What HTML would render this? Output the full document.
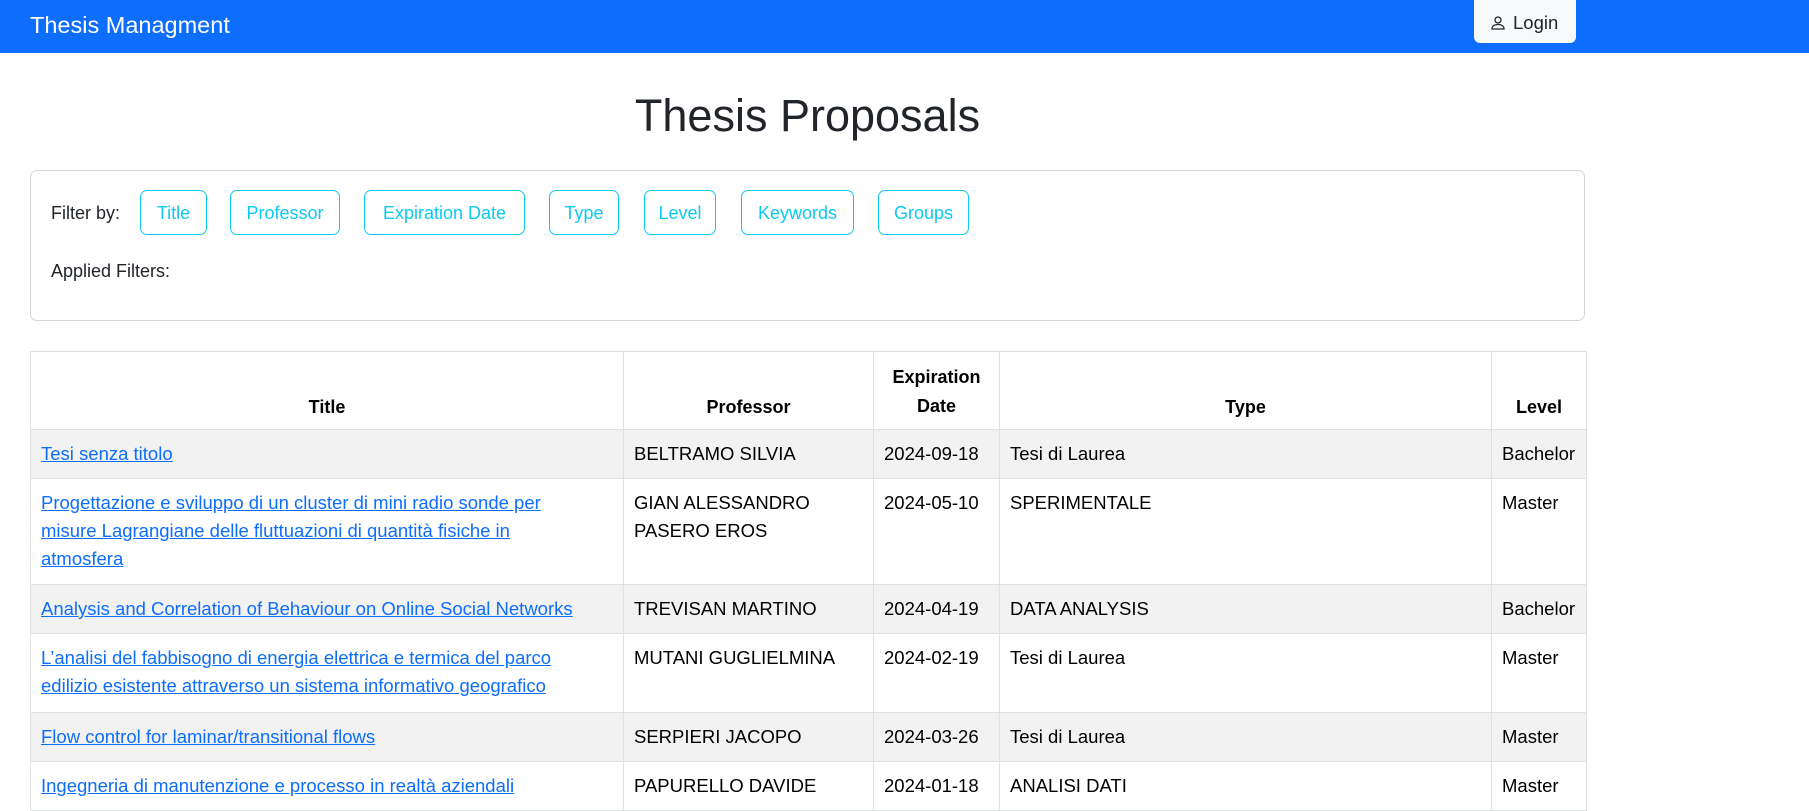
<!DOCTYPE html>
<html><head><meta charset="utf-8"><style>
*{box-sizing:border-box;margin:0;padding:0}
body{width:1809px;height:810px;overflow:hidden;background:#fff;font-family:"Liberation Sans",sans-serif;color:#212529;font-size:18px}
.nav{position:absolute;left:0;top:0;width:1809px;height:53px;background:#0d6efd}
.brand{position:absolute;left:30px;top:10px;color:#fff;font-size:23.5px;line-height:30px}
.login{position:absolute;left:1474px;top:0;width:102px;height:43px;background:#f8f9fa;border-radius:0 0 6px 6px;font-size:18.5px;line-height:45px;color:#212529}
.login svg{position:absolute;left:16px;top:15px}
.login span{position:absolute;left:39px;top:0}
h1{position:absolute;left:0;width:1615px;text-align:center;top:86px;font-weight:400;font-size:45px;line-height:60px}
.card{position:absolute;left:30px;top:170px;width:1555px;height:151px;border:1px solid #d5d5d5;border-radius:7px}
.fb{position:absolute;left:20px;top:30px;line-height:24px;font-size:18px}
.af{position:absolute;left:20px;top:88px;line-height:24px;font-size:18px}
.btn{position:absolute;top:19px;height:45px;border:1px solid #0dcaf0;border-radius:7px;color:#0dcaf0;text-align:center;line-height:45px;font-size:18px;white-space:nowrap}
table{position:absolute;left:30px;top:351px;border-collapse:collapse;table-layout:fixed;width:1556px;color:#000}
td,th{border:1px solid #dee2e6;padding:10px 10px;line-height:28px;vertical-align:top;white-space:nowrap;font-size:18.5px;overflow:hidden}
th{vertical-align:bottom;text-align:center;font-weight:bold;padding:9px 10px 8px;font-size:18px}
tr.s td{background:#f2f2f2}
a{color:#0d6efd;text-decoration:underline}
</style></head><body>
<div class="nav"><div class="brand">Thesis Managment</div>
<div class="login"><svg width="16" height="16" viewBox="0 0 16 16"><circle cx="8" cy="5" r="3" fill="none" stroke="#212529" stroke-width="1.3"/><path d="M2 14c0-3 2.5-4.5 6-4.5s6 1.5 6 4.5z" fill="none" stroke="#212529" stroke-width="1.3"/></svg><span>Login</span></div></div>
<h1>Thesis Proposals</h1>
<div class="card">
<div class="fb">Filter by:</div>
<div class="btn" style="left:109px;width:67px">Title</div>
<div class="btn" style="left:199px;width:110px">Professor</div>
<div class="btn" style="left:333px;width:161px">Expiration Date</div>
<div class="btn" style="left:518px;width:70px">Type</div>
<div class="btn" style="left:613px;width:72px">Level</div>
<div class="btn" style="left:710px;width:113px">Keywords</div>
<div class="btn" style="left:847px;width:91px">Groups</div>
<div class="af">Applied Filters:</div>
</div>
<table>
<colgroup><col style="width:593px"><col style="width:250px"><col style="width:126px"><col style="width:492px"><col style="width:95px"></colgroup>
<tr style="height:78px"><th>Title</th><th>Professor</th><th style="white-space:normal;line-height:29px">Expiration Date</th><th>Type</th><th>Level</th></tr>
<tr class="s" style="height:49px"><td><a>Tesi senza titolo</a></td><td>BELTRAMO SILVIA</td><td>2024-09-18</td><td>Tesi di Laurea</td><td>Bachelor</td></tr>
<tr style="height:106px"><td><a>Progettazione e sviluppo di un cluster di mini radio sonde per<br>misure Lagrangiane delle fluttuazioni di quantità fisiche in<br>atmosfera</a></td><td>GIAN ALESSANDRO<br>PASERO EROS</td><td>2024-05-10</td><td>SPERIMENTALE</td><td>Master</td></tr>
<tr class="s" style="height:48px"><td><a>Analysis and Correlation of Behaviour on Online Social Networks</a></td><td>TREVISAN MARTINO</td><td>2024-04-19</td><td>DATA ANALYSIS</td><td>Bachelor</td></tr>
<tr style="height:79px"><td><a>L’analisi del fabbisogno di energia elettrica e termica del parco<br>edilizio esistente attraverso un sistema informativo geografico</a></td><td>MUTANI GUGLIELMINA</td><td>2024-02-19</td><td>Tesi di Laurea</td><td>Master</td></tr>
<tr class="s" style="height:49px"><td><a>Flow control for laminar/transitional flows</a></td><td>SERPIERI JACOPO</td><td>2024-03-26</td><td>Tesi di Laurea</td><td>Master</td></tr>
<tr style="height:49px"><td><a>Ingegneria di manutenzione e processo in realtà aziendali</a></td><td>PAPURELLO DAVIDE</td><td>2024-01-18</td><td>ANALISI DATI</td><td>Master</td></tr>
</table>
</body></html>
